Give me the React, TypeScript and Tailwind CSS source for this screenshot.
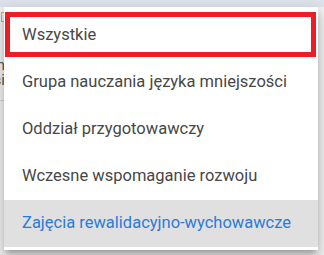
import React from "react";

// ── Menu items ───────────────────────────────────────────────────────────────

const ITEMS = [
  "Wszystkie",
  "Grupa nauczania języka mniejszości",
  "Oddział przygotowawczy",
  "Wczesne wspomaganie rozwoju",
  "Zajęcia rewalidacyjno-wychowawcze",
];

export default function App() {
  return (
    <div className="relative w-[324px] h-[255px] overflow-hidden bg-[#f3f3f3] font-['Roboto',sans-serif]">
      {/* Page behind the menu */}
      <div className="flex flex-col h-full">
        <div className="h-[7px] shrink-0 bg-[#dfe4ec]" />
        <div className="w-[5px] overflow-hidden flex flex-col items-end pt-[5px]">
          <div className="w-[4px] h-[10px] shrink-0 border border-[#d8b24a]" />
          <div className="flex flex-col items-end pt-[36px] text-[15px] leading-[15px] text-[#555]">
            <span>n</span>
            <span>si</span>
          </div>
          <div className="w-full h-px mt-[12px] bg-[#d6d6d6]" />
        </div>
      </div>

      {/* Dropdown */}
      <div className="absolute left-[4px] top-[7px] w-[314px] bg-white pt-[5px] pb-[3px] shadow-[0_5px_5px_-3px_rgba(0,0,0,0.2),0_8px_10px_1px_rgba(0,0,0,0.14),0_3px_14px_2px_rgba(0,0,0,0.12)]">
        {ITEMS.map((label, i) => {
          const last = i === ITEMS.length - 1;
          return (
            <div
              key={label}
              className={
                "relative h-[47px] flex items-center pl-[18px] text-[16.5px] whitespace-nowrap " +
                (last ? "bg-[#e0e0e0] text-[#2b7bd6]" : "text-[#474747]")
              }
            >
              {label}
              {i === 0 && (
                <div className="absolute left-[1px] top-0 w-[311px] h-[45px] border-[5px] border-[#ee1c25]" />
              )}
            </div>
          );
        })}
      </div>
    </div>
  );
}
